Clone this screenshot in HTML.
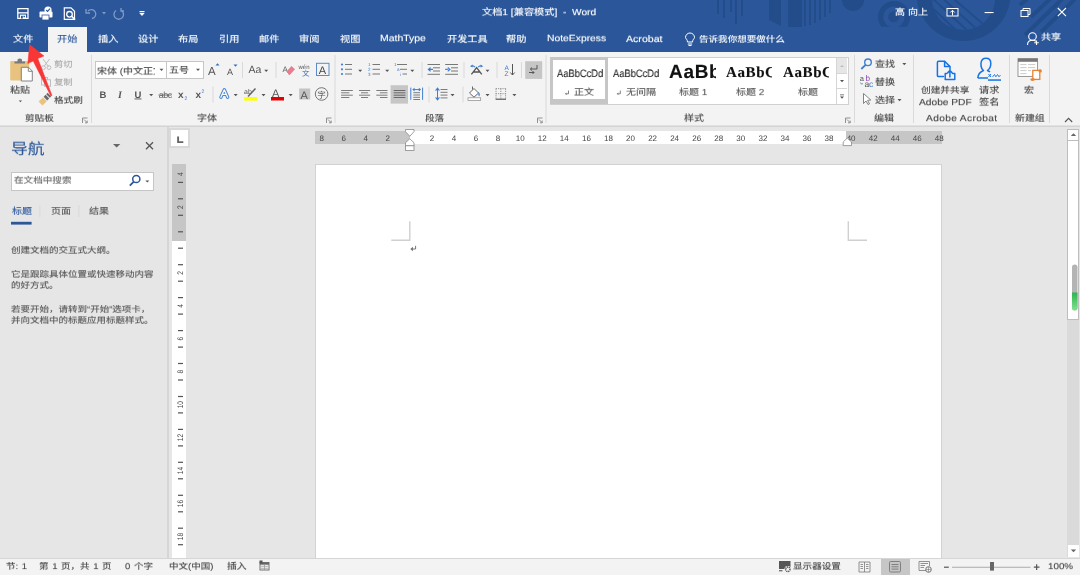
<!DOCTYPE html>
<html lang="zh-CN"><head><meta charset="utf-8">
<style>
html,body{margin:0;padding:0}
body{width:1080px;height:575px;position:relative;overflow:hidden;background:#E6E6E6;font-family:"Liberation Sans",sans-serif;text-rendering:geometricPrecision}
.a{position:absolute;white-space:nowrap;line-height:1;will-change:transform;-webkit-text-stroke:0.12px currentColor;transform:scaleY(0.9);transform-origin:0 85%}
.r{position:absolute}
.w{color:#fff}
.t{color:#444}
svg{position:absolute;left:0;top:0}
</style></head><body>
<!-- title + tabs -->
<div class="r" style="left:0;top:0;width:1080px;height:52px;background:#2B579A"></div>
<svg width="1080" height="52" viewBox="0 0 1080 52">
 <defs><clipPath id="ringclip"><rect x="860" y="0" width="60" height="26.8"/></clipPath><clipPath id="innerclip"><circle cx="963.5" cy="-1.5" r="31.5"/></clipPath></defs>
 <g fill="#234C8B">
  <rect x="717" y="0" width="2" height="14"/><rect x="723" y="0" width="2" height="18"/><rect x="730" y="0" width="2" height="12"/>
  <rect x="735" y="0" width="2" height="24"/><rect x="741" y="0" width="2" height="16"/>
  <path d="M769 0 L781 0 L781 26 L769 20 Z"/>
  <rect x="788" y="0" width="14" height="27"/>
  <rect x="804" y="0" width="2" height="26"/><rect x="809" y="0" width="2" height="25"/><rect x="814" y="0" width="2" height="23"/><rect x="819" y="0" width="2" height="20"/><rect x="824" y="0" width="2" height="17"/><rect x="829" y="0" width="2" height="13"/>
  <circle cx="853" cy="0" r="11"/><circle cx="893.7" cy="16.8" r="5.5"/>
 </g>
 <g fill="none" stroke="#234C8B">
  <circle cx="894" cy="17" r="13.3" stroke-width="5.4" clip-path="url(#ringclip)"/>
 </g>
 <path fill="#234C8B" fill-rule="evenodd" d="M916.5 -6 A47 47 0 1 0 1010.5 -6 A47 47 0 1 0 916.5 -6 Z M932 -1.5 A31.5 31.5 0 1 0 995 -1.5 A31.5 31.5 0 1 0 932 -1.5 Z"/>
 <g stroke="#234C8B" stroke-width="2" clip-path="url(#innerclip)">
  <path d="M926 2 L960 34 M932 -2 L970 33 M940 -4 L980 32 M948 -6 L990 30"/>
 </g>
 <g stroke="#234C8B" stroke-width="4">
  <path d="M1020 5 L1027 -1 M1031 17 L1050 -1 M1025 35 L1062 -1 M1041 32 L1075 -1"/>
 </g>
</svg>
<div class="r" style="left:48px;top:27px;width:39px;height:25px;background:#F3F3F3"></div>

<!-- QAT icons -->
<svg width="160" height="26" viewBox="0 0 160 26">
 <path d="M17.8 8.7 H28 V18.4 H17.8 Z" fill="none" stroke="#fff" stroke-width="1.3"/>
 <rect x="17.8" y="12.2" width="10.2" height="1.3" fill="#fff"/>
 <rect x="19.9" y="14.6" width="6.1" height="3.9" fill="#fff"/>
 <rect x="21" y="15.8" width="1.8" height="2.7" fill="#2B579A"/>
 <rect x="23.4" y="15.8" width="1.6" height="1.4" fill="#2B579A"/>
 <!-- print -->
 <rect x="39.5" y="11.5" width="13" height="6" rx="1" fill="#fff"/>
 <rect x="42" y="15" width="7" height="5" fill="#fff" stroke="#2B579A" stroke-width="0.8"/>
 <circle cx="48" cy="10" r="3.6" fill="#fff"/>
 <path d="M46.2 10 L47.6 11.4 L50 8.6" stroke="#2B579A" stroke-width="1.1" fill="none"/>
 <!-- preview -->
 <path d="M64.3 7.8 H71 L74.5 11.2 V19.3 H64.3 Z" fill="none" stroke="#fff" stroke-width="1.2"/>
 <circle cx="69.5" cy="14.3" r="2.8" fill="none" stroke="#fff" stroke-width="1.3"/>
 <path d="M71.6 16.3 L75 19.6" stroke="#fff" stroke-width="1.6"/>
 <!-- undo -->
 <path d="M88 11 A4.5 4.5 0 1 1 92 18.5" fill="none" stroke="#7E9BC8" stroke-width="1.3"/>
 <path d="M86 9 V13 H90" fill="none" stroke="#7E9BC8" stroke-width="1.3"/>
 <path d="M102 12 L106 12 L104 14.5 Z" fill="#7E9BC8"/>
 <!-- redo -->
 <path d="M121.5 10.5 A4.8 4.8 0 1 1 116 10.5" fill="none" stroke="#7E9BC8" stroke-width="1.3"/>
 <path d="M121 8 V11 H124" fill="none" stroke="#7E9BC8" stroke-width="1.3"/>
 <!-- customize -->
 <rect x="139.5" y="11" width="5" height="1.2" fill="#fff"/>
 <path d="M139.3 13 H144.7 L142 16 Z" fill="#fff"/>
</svg>
<div class="a w" style="left:482px;top:7.5px;font-size:10.2px">文档1 [兼容模式]&nbsp;&nbsp;-&nbsp;&nbsp;Word</div>
<div class="a w" style="left:894.8px;top:7.5px;font-size:10px;word-spacing:0.3px">高 向上</div>
<svg width="1080" height="52" viewBox="0 0 1080 52">
 <rect x="947" y="8.5" width="11" height="7.5" fill="none" stroke="#fff" stroke-width="1"/>
 <path d="M952.5 15.5 V10.5 M950.3 12.5 L952.5 10.3 L954.7 12.5" stroke="#fff" stroke-width="1" fill="none"/>
 <rect x="984.6" y="12" width="9" height="1.1" fill="#fff"/>
 <rect x="1021" y="10.5" width="7" height="6" fill="none" stroke="#fff" stroke-width="1"/>
 <path d="M1023 10.5 V8.5 H1030 V14.5 H1028" fill="none" stroke="#fff" stroke-width="1"/>
 <path d="M1057.8 8 L1066 16.2 M1066 8 L1057.8 16.2" stroke="#fff" stroke-width="1.1"/>
 <!-- share -->
 <circle cx="1032.5" cy="36.5" r="3.8" fill="none" stroke="#fff" stroke-width="1.1"/>
 <path d="M1027.5 45 C1027.5 41 1030 40.3 1032.5 40.3 C1034 40.3 1035 40.6 1036 41.2" fill="none" stroke="#fff" stroke-width="1.1"/>
 <path d="M1036.5 40.5 V45 M1034.2 42.7 H1038.8" stroke="#fff" stroke-width="1.1"/>
 <!-- bulb -->
 <path d="M687.5 42 C687.5 39.5 685.5 38.5 685.5 37.5 A4.5 4.5 0 1 1 694.5 37.5 C694.5 38.5 692.5 39.5 692.5 42 Z" fill="none" stroke="#fff" stroke-width="1"/>
 <path d="M687.8 44 H692.2 M688.5 45.5 H691.5" stroke="#fff" stroke-width="1"/>
</svg>
<div class="a w" style="left:1041px;top:33px;font-size:10px">共享</div>
<div class="a w" style="left:13px;top:35px;font-size:10.2px">文件</div>
<div class="a" style="left:57px;top:35px;font-size:10.2px;color:#2B579A">开始</div>
<div class="a w" style="left:98px;top:35px;font-size:10.2px">插入</div>
<div class="a w" style="left:138px;top:35px;font-size:10.2px">设计</div>
<div class="a w" style="left:178px;top:35px;font-size:10.2px">布局</div>
<div class="a w" style="left:219px;top:35px;font-size:10.2px">引用</div>
<div class="a w" style="left:259px;top:35px;font-size:10.2px">邮件</div>
<div class="a w" style="left:299px;top:35px;font-size:10.2px">审阅</div>
<div class="a w" style="left:340px;top:35px;font-size:10.2px">视图</div>
<div class="a w" style="left:380px;top:34px;font-size:10.45px">MathType</div>
<div class="a w" style="left:447px;top:35px;font-size:10.2px">开发工具</div>
<div class="a w" style="left:506px;top:35px;font-size:10.2px">帮助</div>
<div class="a w" style="left:547px;top:34px;font-size:10.35px">NoteExpress</div>
<div class="a w" style="left:626px;top:34px;font-size:10.6px">Acrobat</div>
<div class="a w" style="left:699px;top:35px;font-size:9.55px">告诉我你想要做什么</div>

<!-- RIBBON -->
<div class="r" style="left:0;top:52px;width:1080px;height:74px;background:#F3F3F3"></div>
<div class="r" style="left:0;top:125px;width:1080px;height:1px;background:#E2E2E2"></div><div class="r" style="left:0;top:126px;width:1080px;height:1px;background:#D4D4D4"></div>
<svg width="1080" height="130" viewBox="0 0 1080 130">
 <g fill="#DADADA">
  <rect x="91" y="55" width="1" height="68"/>
  <rect x="334.5" y="55" width="1" height="68"/>
  <rect x="545.5" y="55" width="1" height="68"/>
  <rect x="854" y="55" width="1" height="68"/>
  <rect x="913" y="55" width="1" height="68"/>
  <rect x="1009" y="55" width="1" height="68"/>
  <rect x="1049" y="55" width="1" height="68"/>
 </g>
 <g fill="#DADADA">
  <rect x="242" y="62" width="1" height="16"/>
  <rect x="275.5" y="62" width="1" height="16"/>
  <rect x="212.5" y="86.5" width="1" height="16"/>
  <rect x="421.5" y="62" width="1" height="16"/>
  <rect x="463.5" y="62" width="1" height="16"/>
  <rect x="496.5" y="62" width="1" height="16"/>
  <rect x="521" y="62" width="1" height="16"/>
  <rect x="428.5" y="86.5" width="1" height="16"/>
  <rect x="462.5" y="86.5" width="1" height="16"/>
 </g>
 <!-- launchers -->
 <g fill="none" stroke="#777" stroke-width="0.8">
  <path d="M82.5 123 V118 H87.5 M84 119.5 L87 122.5 M85 122.8 H87.2 V120.6"/>
  <path d="M326.5 123 V118 H331.5 M328 119.5 L331 122.5 M329 122.8 H331.2 V120.6"/>
  <path d="M537.5 123 V118 H542.5 M539 119.5 L542 122.5 M540 122.8 H542.2 V120.6"/>
  <path d="M845.5 123 V118 H850.5 M847 119.5 L850 122.5 M848 122.8 H850.2 V120.6"/>
 </g>
 <path d="M1065 122 L1068.6 118.3 L1072.2 122" fill="none" stroke="#555" stroke-width="1.1"/>
</svg>
<div class="a t" style="left:25px;top:114.3px;font-size:9.6px">剪贴板</div>
<div class="a t" style="left:197px;top:114.3px;font-size:10px">字体</div>
<div class="a t" style="left:425px;top:114.3px;font-size:9.6px">段落</div>
<div class="a t" style="left:684px;top:114.3px;font-size:10px">样式</div>
<div class="a t" style="left:874px;top:114.3px;font-size:10px">编辑</div>
<div class="a t" style="left:925.5px;top:114px;font-size:10.2px;letter-spacing:0.35px">Adobe Acrobat</div>
<div class="a t" style="left:1015px;top:114.3px;font-size:9.9px">新建组</div>

<!-- clipboard group -->
<svg width="100" height="130" viewBox="0 0 100 130">
 <rect x="10.2" y="61" width="19" height="19.5" rx="1" fill="#E8C27E"/>
 <path d="M14.5 63.5 V61.5 H17.5 V59.5 Q19.8 57.5 22 59.5 V61.5 H25 V63.5 Z" fill="#7A7A7A"/>
 <path d="M21.3 67.3 H28.5 L32.3 71.1 V81 H21.3 Z" fill="#fff" stroke="#777" stroke-width="0.9"/>
 <path d="M28.3 67.3 V71.3 H32.3" fill="none" stroke="#777" stroke-width="0.9"/>
 <path d="M18.8 100.5 H22 L20.4 102.3 Z" fill="#555"/>
 <!-- scissors -->
 <g fill="none" stroke="#BDBDBD" stroke-width="1">
  <path d="M43 59 L48.5 66.5 M49.5 59 L44 66.5"/>
  <circle cx="43.5" cy="67.6" r="1.9"/><circle cx="49" cy="67.6" r="1.9"/>
 </g>
 <!-- copy -->
 <g fill="none" stroke="#BDBDBD" stroke-width="1">
  <rect x="41.5" y="77.5" width="6" height="7.5"/>
  <rect x="44.5" y="79.8" width="6" height="6.5" fill="#F3F3F3"/>
 </g>
 <!-- format painter -->
 <path d="M38.6 101.6 L43 97.4 L46.8 101.2 L42.4 105.4 Z" fill="#E8C27E"/>
 <path d="M43.6 96.8 L45.6 94.8 L49.2 98.4 L47.2 100.4 Z" fill="#6A6A6A"/>
 <path d="M46.2 94.2 L47.6 92.8 L51.2 96.4 L49.8 97.8 Z" fill="#6A6A6A"/>
</svg>
<div class="a t" style="left:10px;top:85.5px;font-size:10px">粘贴</div>
<div class="a" style="left:54px;top:60px;font-size:9.3px;color:#A8A8A8">剪切</div>
<div class="a" style="left:54px;top:78px;font-size:9.3px;color:#A8A8A8">复制</div>
<div class="a t" style="left:54px;top:96px;font-size:9.6px">格式刷</div>

<!-- font group -->
<div class="r" style="left:95px;top:61px;width:107px;height:16px;background:#fff;border:1px solid #C6C6C6"></div>
<div class="r" style="left:166px;top:62px;width:1px;height:16px;background:#C6C6C6"></div>
<div class="a" style="left:97px;top:64.5px;font-size:10px;line-height:13px;height:13px;color:#444;width:58px;overflow:hidden">宋体 (中文正文</div>
<div class="a" style="left:169px;top:66px;font-size:10px;color:#444">五号</div>
<svg width="1080" height="130" viewBox="0 0 1080 130">
 <g fill="#555">
  <path d="M159.5 68.8 H163.5 L161.5 71 Z"/>
  <path d="M196 68.8 H200 L198 71 Z"/>
  <path d="M264.2 69.8 H268.2 L266.2 72 Z"/>
  <path d="M149.2 94 H153.2 L151.2 96.2 Z"/>
  <path d="M233.7 94 H237.7 L235.7 96.2 Z"/>
  <path d="M261.5 94 H265.5 L263.5 96.2 Z"/>
  <path d="M288.7 94 H292.7 L290.7 96.2 Z"/>
 </g>
 <!-- grow/shrink -->
 <text x="208" y="74.5" font-family="Liberation Sans" font-size="11.5" fill="#555">A</text>
 <path d="M215.5 65.5 L217.5 63.3 L219.5 65.5 Z" fill="#2F6FBF"/>
 <text x="227" y="74.5" font-family="Liberation Sans" font-size="9" fill="#555">A</text>
 <path d="M233.5 64.5 H237.5 L235.5 66.8 Z" fill="#2F6FBF"/>
 <text x="248.5" y="73" font-family="Liberation Sans" font-size="10.5" fill="#555">Aa</text>
 <!-- clear formatting -->
 <text x="282.5" y="72" font-family="Liberation Sans" font-size="8" fill="#666">A</text>
 <path d="M286 72 L291.5 66 L295 69.3 L289.5 75.3 Z" fill="#E87D8F"/>
 <path d="M286 72 L288 74 " stroke="#fff" stroke-width="0.8"/>
 <!-- phonetic -->
 <text x="298.5" y="68.5" font-family="Liberation Sans" font-size="6" fill="#555">wén</text>
 <text x="302" y="76" font-family="Liberation Sans" font-size="7.5" fill="#2F6FBF">文</text>
 <!-- char border -->
 <rect x="316.5" y="63.3" width="12.5" height="12.2" fill="none" stroke="#5A8BC8" stroke-width="1"/>
 <text x="318.8" y="74" font-family="Liberation Sans" font-size="11" fill="#444">A</text>
 <!-- row 2 -->
 <text x="99.5" y="97.8" font-family="Liberation Sans" font-size="9.5" font-weight="bold" fill="#555">B</text>
 <text x="118" y="97.8" font-family="Liberation Serif" font-size="10" font-style="italic" font-weight="bold" fill="#555">I</text>
 <text x="134.5" y="97.5" font-family="Liberation Sans" font-size="9.5" font-weight="bold" fill="#555">U</text>
 <rect x="134.5" y="98.5" width="7" height="0.9" fill="#555"/>
 <text x="158.8" y="97.5" font-family="Liberation Sans" font-size="9" fill="#666" letter-spacing="-0.55">abc</text>
 <rect x="158.5" y="94.6" width="13" height="0.9" fill="#666"/>
 <text x="178" y="97.5" font-family="Liberation Sans" font-size="10" font-weight="bold" fill="#555">x</text>
 <text x="184.5" y="100" font-family="Liberation Sans" font-size="5" fill="#2F6FBF">2</text>
 <text x="195.5" y="97.5" font-family="Liberation Sans" font-size="10" font-weight="bold" fill="#555">x</text>
 <text x="201.5" y="93" font-family="Liberation Sans" font-size="5" fill="#2F6FBF">2</text>
 <!-- text effects -->
 <path d="M220.9 97.3 L224.3 89.8 L227.7 97.3 M222.5 94.3 H226.1" fill="none" stroke="#4A86CF" stroke-width="3.3" stroke-linejoin="round" stroke-linecap="round"/>
 <path d="M220.9 97.3 L224.3 89.8 L227.7 97.3 M222.5 94.3 H226.1" fill="none" stroke="#FAFAFA" stroke-width="1.3" stroke-linejoin="round" stroke-linecap="round"/>
 <!-- highlight -->
 <text x="244" y="93.5" font-family="Liberation Sans" font-size="7" fill="#555">ab</text>
 <path d="M248 96.5 L255.5 88.5" stroke="#666" stroke-width="1.6"/>
 <rect x="244.2" y="97" width="13" height="3.6" fill="#FFFF00"/>
 <!-- font color -->
 <text x="272" y="96.5" font-family="Liberation Sans" font-size="11" fill="#555">A</text>
 <rect x="271" y="97" width="13" height="3.5" fill="#E60000"/>
 <!-- shading -->
 <rect x="299.2" y="88.5" width="11" height="11" fill="#C4C4C4"/>
 <text x="300.5" y="98.5" font-family="Liberation Sans" font-size="11" fill="#555">A</text>
 <!-- enclose -->
 <circle cx="321.6" cy="94" r="6.3" fill="none" stroke="#666" stroke-width="0.9"/>
 <text x="317.2" y="97.5" font-family="Liberation Sans" font-size="8.5" fill="#555">字</text>
</svg>

<!-- paragraph group -->
<svg width="1080" height="130" viewBox="0 0 1080 130">
 <g fill="#555">
  <path d="M358.2 69.8 H362.2 L360.2 72 Z"/>
  <path d="M385.2 69.8 H389.2 L387.2 72 Z"/>
  <path d="M410.3 69.8 H414.3 L412.3 72 Z"/>
  <path d="M485.5 69.8 H489.5 L487.5 72 Z"/>
  <path d="M450.5 94 H454.5 L452.5 96.2 Z"/>
  <path d="M485.5 94 H489.5 L487.5 96.2 Z"/>
  <path d="M512.4 94 H516.4 L514.4 96.2 Z"/>
 </g>
 <!-- bullets -->
 <g fill="#3F7FCF"><circle cx="342" cy="64.5" r="1.1"/><circle cx="342" cy="69.3" r="1.1"/><circle cx="342" cy="74" r="1.1"/></g>
 <g stroke="#777" stroke-width="1"><path d="M345 64.5 H352 M345 69.3 H352 M345 74 H352"/></g>
 <!-- numbering -->
 <g fill="#3F7FCF" font-family="Liberation Sans" font-size="4.5"><text x="368" y="66">1</text><text x="368" y="71">2</text><text x="368" y="76">3</text></g>
 <g stroke="#777" stroke-width="1"><path d="M372.5 64.5 H380 M372.5 69.3 H380 M372.5 74 H380"/></g>
 <!-- multilevel -->
 <g fill="#3F7FCF" font-family="Liberation Sans" font-size="4.5"><text x="394" y="66">1</text><text x="397" y="71">a</text><text x="400" y="76">i</text></g>
 <g stroke="#777" stroke-width="1"><path d="M397 64.5 H407 M400 69.3 H407 M402.5 74 H407"/></g>
 <!-- decrease indent -->
 <g stroke="#777" stroke-width="1"><path d="M427.5 64.5 H440 M433 67.8 H440 M433 71 H440 M427.5 74.3 H440"/></g>
 <path d="M427.5 69.4 L430.5 66.8 V72 Z M429.5 68.8 H433 V70 H429.5Z" fill="#3F7FCF"/>
 <!-- increase indent -->
 <g stroke="#777" stroke-width="1"><path d="M445.2 64.5 H458 M451 67.8 H458 M451 71 H458 M445.2 74.3 H458"/></g>
 <path d="M450.8 69.4 L447.8 66.8 V72 Z M445.2 68.8 H448.5 V70 H445.2Z" fill="#3F7FCF"/>
 <!-- asian layout -->
 <path d="M471.4 74.3 L476.6 67.6 L481.8 74.3 M473.6 72 H479.6" fill="none" stroke="#555" stroke-width="1.3"/>
 <path d="M475 67.2 Q473.6 65.4 472 66" fill="none" stroke="#3F7FCF" stroke-width="1.1"/>
 <path d="M478.2 67.2 Q479.6 65.4 481.2 66" fill="none" stroke="#3F7FCF" stroke-width="1.1"/>
 <path d="M470 66.2 L472.6 64.6 L472.6 67.6 Z M483.2 66.2 L480.6 64.6 L480.6 67.6 Z" fill="#3F7FCF"/>
 <!-- sort -->
 <text x="504.5" y="69.5" font-family="Liberation Sans" font-size="6.5" fill="#3F7FCF">A</text>
 <text x="504.5" y="75.5" font-family="Liberation Sans" font-size="6.5" fill="#9B59B6">Z</text>
 <path d="M512.5 64 V75 M510.3 72.5 L512.5 75 L514.7 72.5" fill="none" stroke="#555" stroke-width="1"/>
 <!-- show/hide selected -->
 <rect x="525.2" y="61.2" width="17" height="17.7" fill="#C6C6C6"/>
 <path d="M537 65 V69 H530.5 M532 67.5 L530.3 69 L532 70.5" fill="none" stroke="#555" stroke-width="1"/>
 <path d="M529 72.5 H534 M532.5 71 L534 72.5 L532.5 74" fill="none" stroke="#555" stroke-width="1"/>
 <!-- align row -->
 <g stroke="#6E6E6E" stroke-width="0.9">
  <path d="M341.1 90.5 H352.8 M341.1 92.8 H349.3 M341.1 95.2 H352.8 M341.1 97.5 H349.3"/>
  <path d="M359 90.5 H370.2 M361 92.8 H368.1 M359 95.2 H370.2 M361 97.5 H368.1"/>
  <path d="M376.3 90.5 H387.5 M379.9 92.8 H387.5 M376.3 95.2 H387.5 M379.9 97.5 H387.5"/>
 </g>
 <rect x="390.6" y="85.2" width="17.4" height="18.4" fill="#C6C6C6"/>
 <g stroke="#5E5E5E" stroke-width="0.9"><path d="M393.7 90.5 H405.4 M393.7 92.8 H405.4 M393.7 95.2 H405.4 M393.7 97.5 H405.4"/></g>
 <g stroke="#6E6E6E" stroke-width="0.9"><path d="M413.3 92.7 H420 M413.3 95 H420 M413.3 97.3 H420 M413.3 99.5 H420"/></g>
 <g stroke="#3F7FCF" stroke-width="1"><path d="M410.8 87.6 V99.8 M422.6 87.6 V99.8 M413.5 89.6 H420"/></g>
 <path d="M412.3 89.6 L414.6 87.7 V91.5 Z M421.1 89.6 L418.8 87.7 V91.5 Z" fill="#3F7FCF"/>
 <!-- line spacing -->
 <g stroke="#6E6E6E" stroke-width="0.9"><path d="M440.5 89.5 H447.5 M440.5 92.3 H447.5 M440.5 95.1 H447.5 M440.5 97.9 H447.5"/></g>
 <path d="M437.5 89 V99" stroke="#3F7FCF" stroke-width="1"/>
 <path d="M435.6 90.6 L437.5 88.2 L439.4 90.6 M435.6 97.4 L437.5 99.8 L439.4 97.4" fill="none" stroke="#3F7FCF" stroke-width="1.1"/>
 <!-- shading -->
 <path d="M469.5 93 L474 88.5 L478.5 93 L474 97.2 Z" fill="#fff" stroke="#555" stroke-width="0.9"/>
 <path d="M472.5 89.5 V86.5" stroke="#555" stroke-width="0.9"/>
 <path d="M478.8 92 Q480.8 94.5 479.5 96.5 Q477.5 95 478.8 92Z" fill="#3F7FCF"/>
 <rect x="468" y="97.8" width="12.7" height="2.8" fill="#fff" stroke="#888" stroke-width="0.7"/>
 <!-- borders -->
 <g fill="none" stroke="#8A8A8A" stroke-width="0.9" stroke-dasharray="1.2 1"><path d="M495.8 88.6 H505.8 M495.8 93.7 H505.8 M496 88.6 V98.5 M500.8 88.6 V98.5 M505.6 88.6 V98.5"/></g>
 <path d="M495.6 99.2 H506" stroke="#555" stroke-width="1.2"/>
</svg>

<!-- styles gallery -->
<div class="r" style="left:550px;top:57px;width:297px;height:46px;background:#fff;border:1px solid #D0D0D0"></div>
<div class="r" style="left:550px;top:57px;width:52px;height:39px;border:3px solid #C6C6C6;border-bottom-width:5px;background:#fff"></div>
<div class="r" style="left:837px;top:58px;width:10px;height:15px;background:#E6E6E6"></div>
<div class="r" style="left:837px;top:73px;width:10px;height:1px;background:#D6D6D6"></div>
<div class="r" style="left:837px;top:88px;width:10px;height:1px;background:#D6D6D6"></div>
<div class="r" style="left:836px;top:58px;width:1px;height:46px;background:#D6D6D6"></div>
<svg width="1080" height="130" viewBox="0 0 1080 130">
 <path d="M840 67 L842 65 L844 67 Z" fill="#BBB"/>
 <path d="M840 80 H844 L842 82.2 Z" fill="#555"/>
 <path d="M840 94.5 H844 V95.3 H840Z M840 96.5 H844 L842 98.7 Z" fill="#555"/>
 <g fill="none" stroke="#666" stroke-width="0.8">
  <path d="M568.5 90.5 V93.8 H565.5 M566.5 92.8 L565.5 93.8 L566.5 94.8"/>
  <path d="M620.3 90.5 V93.8 H617.3 M618.3 92.8 L617.3 93.8 L618.3 94.8"/>
 </g>
</svg>
<div class="a" style="left:556.5px;top:68.5px;font-size:10.8px;color:#222;-webkit-text-stroke:0.1px #222;transform:scaleX(0.865);transform-origin:0 0">AaBbCcDd</div>
<div class="a" style="left:613px;top:68.5px;font-size:10.8px;color:#222;-webkit-text-stroke:0.1px #222;transform:scaleX(0.865);transform-origin:0 0">AaBbCcDd</div>
<div class="a" style="left:574px;top:88px;font-size:10px;color:#555">正文</div>
<div class="a" style="left:626px;top:88px;font-size:10px;color:#555">无间隔</div>
<div class="r" style="left:669px;top:60px;width:47px;height:24px;overflow:hidden"><div class="a" style="left:0;top:3px;font-size:19px;font-weight:bold;color:#111;letter-spacing:0.7px;transform:none">AaBb</div></div>
<div class="r" style="left:726px;top:60px;width:46px;height:24px;overflow:hidden"><div class="a" style="left:0;top:5.5px;font-size:15px;font-weight:bold;color:#111;font-family:'Liberation Serif',serif;letter-spacing:0.6px;transform:none">AaBbC</div></div>
<div class="r" style="left:783px;top:60px;width:46px;height:24px;overflow:hidden"><div class="a" style="left:0;top:5.5px;font-size:15px;font-weight:bold;color:#111;font-family:'Liberation Serif',serif;letter-spacing:0.6px;transform:none">AaBbC</div></div>
<div class="a" style="left:678.5px;top:88px;font-size:10px;color:#555">标题 1</div>
<div class="a" style="left:736px;top:88px;font-size:10px;color:#555">标题 2</div>
<div class="a" style="left:798px;top:88px;font-size:10px;color:#555">标题</div>

<!-- editing group -->
<svg width="1080" height="130" viewBox="0 0 1080 130">
 <circle cx="868" cy="62.3" r="3.3" fill="none" stroke="#3F7FCF" stroke-width="1.4"/>
 <path d="M865.6 64.8 L861.3 69" stroke="#3F7FCF" stroke-width="1.8"/>
 <path d="M902.3 63 H906.3 L904.3 65.2 Z" fill="#555"/>
 <text x="859.8" y="81" font-family="Liberation Sans" font-size="7.5" fill="#555">a</text>
 <text x="865.6" y="81" font-family="Liberation Sans" font-size="8.2" fill="#8E44AD">b</text>
 <text x="864.4" y="87" font-family="Liberation Sans" font-size="8.5" fill="#555">a</text>
 <text x="869" y="87" font-family="Liberation Sans" font-size="8.5" fill="#3F7FCF">c</text>
 <path d="M860.4 82.6 L861.6 84.2 L862.8 83.6" fill="none" stroke="#3F7FCF" stroke-width="0.9"/>
 <path d="M863.5 93.5 V103.5 L866 101 L868 104.5 L869.5 103.8 L867.6 100.3 L870.8 100 Z" fill="#fff" stroke="#666" stroke-width="0.8" stroke-linejoin="round"/>
 <path d="M897.5 99 H901.5 L899.5 101.2 Z" fill="#555"/>
 <!-- adobe create pdf -->
 <g fill="none" stroke="#1473E6" stroke-width="1.5" stroke-linejoin="round" stroke-linecap="round">
  <path d="M943.5 76.6 H938.6 Q937.4 76.6 937.4 75.4 V62.4 Q937.4 61.2 938.6 61.2 H944.6 L950 66.6 V69.5"/>
  <path d="M944.6 61.6 V66.6 H949.6"/>
  <path d="M947 73.4 H945.2 V79.5 H954.8 V73.4 H952.6"/>
  <path d="M949.9 77 V70.6 M947.8 72.6 L949.9 70.5 L952 72.6"/>
 </g>
 <!-- request sign -->
 <g fill="none" stroke="#1473E6" stroke-width="1.5" stroke-linejoin="round">
  <path d="M977.8 78 C978 74 980.5 71.8 983.5 70.5 C981 68.5 980.8 65.5 981 63 C981.5 59.5 984 58.3 986 58.3 C988.5 58.3 990.8 60 990.8 63.5 C990.8 66.5 989.5 69 987.5 70.5 C988.5 71 989.5 71.5 990 72"/>
  <path d="M977.8 78 H988"/>
 </g>
 <path d="M988.5 74 L991 77 M991 74 L988.5 77" stroke="#1473E6" stroke-width="1"/>
 <path d="M992.5 77 L994.5 74.5 L995.8 76.8 L997.5 74.5 L999 76.8 L1000.5 75" fill="none" stroke="#1473E6" stroke-width="0.9"/>
 <rect x="988" y="79.3" width="13" height="1.5" fill="#1473E6"/>
 <!-- macro -->
 <rect x="1018" y="58.6" width="19.6" height="17.8" fill="#fff" stroke="#8A8A8A" stroke-width="0.9"/>
 <rect x="1018" y="58.6" width="19.6" height="3.2" fill="#777"/>
 <g stroke="#C4C4C4" stroke-width="0.9"><path d="M1020.3 64.6 H1026.5 M1028 64.6 H1035.3 M1020.3 67.6 H1026.5 M1028 67.6 H1035.3 M1020.3 70.6 H1026.5 M1028 70.6 H1031 M1020.3 73.6 H1026.5"/></g>
 <rect x="1032.8" y="70.4" width="7" height="9" fill="#fff" stroke="#E8822F" stroke-width="1.3"/>
 <circle cx="1040.2" cy="70.9" r="1.7" fill="#E8822F"/>
 <ellipse cx="1032.6" cy="79.6" rx="2.3" ry="1.4" fill="#E8822F"/>
</svg>
<div class="a t" style="left:875px;top:60px;font-size:10px">查找</div>
<div class="a t" style="left:875px;top:78px;font-size:10px">替换</div>
<div class="a t" style="left:875px;top:95.8px;font-size:10px">选择</div>
<div class="a t" style="left:921px;top:86px;font-size:9.7px">创建并共享</div>
<div class="a t" style="left:918.5px;top:97.5px;font-size:10.2px;letter-spacing:0px">Adobe PDF</div>
<div class="a t" style="left:979px;top:86px;font-size:10.2px">请求</div>
<div class="a t" style="left:979px;top:98px;font-size:10.2px">签名</div>
<div class="a t" style="left:1024px;top:86px;font-size:10px">宏</div>

<!-- NAV PANE -->
<div class="r" style="left:167px;top:127px;width:2px;height:431px;background:#D6D6D6"></div>
<div class="a" style="left:10.5px;top:140.5px;font-size:16.8px;color:#2B579A">导航</div>
<div class="r" style="left:11px;top:171.5px;width:141px;height:17px;background:#fff;border:1px solid #C6C6C6"></div>
<svg width="170" height="230" viewBox="0 0 170 230">
 <path d="M113 144 H120.3 L116.65 147.6 Z" fill="#666"/>
 <path d="M146 142.2 L153 149.2 M153 142.2 L146 149.2" stroke="#555" stroke-width="1.3"/>
 <circle cx="136.3" cy="179" r="3.6" fill="none" stroke="#2B579A" stroke-width="1.5"/>
 <path d="M133.8 181.6 L129.8 185.6" stroke="#2B579A" stroke-width="1.8"/>
 <path d="M145.3 180.5 H149.3 L147.3 182.5 Z" fill="#555"/>
 <rect x="39.5" y="205" width="0.8" height="12" fill="#D6D6D6"/>
 <rect x="78.5" y="205" width="0.8" height="12" fill="#D6D6D6"/>
 <rect x="11" y="221.8" width="20.6" height="2.8" fill="#2B579A"/>
</svg>
<div class="a" style="left:13.5px;top:176px;font-size:9.6px;color:#6A6A6A">在文档中搜索</div>
<div class="a" style="left:12px;top:207px;font-size:10px;color:#2B579A">标题</div>
<div class="a" style="left:50.5px;top:207px;font-size:10px;color:#555">页面</div>
<div class="a" style="left:89px;top:207px;font-size:10px;color:#555">结果</div>
<div class="a" style="left:11.3px;top:245.5px;font-size:9.5px;color:#555">创建文档的交互式大纲。</div>
<div class="a" style="left:11.3px;top:270.3px;font-size:9.5px;color:#555">它是跟踪具体位置或快速移动内容</div>
<div class="a" style="left:11.3px;top:280.7px;font-size:9.5px;color:#555">的好方式。</div>
<div class="a" style="left:11.3px;top:305px;font-size:9.5px;color:#555">若要开始，请转到“开始”选项卡，</div>
<div class="a" style="left:11.3px;top:316.3px;font-size:9.5px;color:#555">并向文档中的标题应用标题样式。</div>
<!-- STATUS BAR -->
<div class="r" style="left:0;top:558px;width:1080px;height:17px;background:#F3F3F3"></div>
<div class="r" style="left:0;top:558px;width:1080px;height:1px;background:#D6D6D6"></div>
<div class="a t" style="left:5.5px;top:561.5px;font-size:9.5px;word-spacing:1px">节: 1</div>
<div class="a t" style="left:38.5px;top:561.5px;font-size:9.5px;word-spacing:1px">第 1 页，共 1 页</div>
<div class="a t" style="left:125px;top:561.5px;font-size:9.5px;word-spacing:1px">0 个字</div>
<div class="a t" style="left:168.5px;top:561.5px;font-size:9.5px">中文(中国)</div>
<div class="a t" style="left:227px;top:561.5px;font-size:9.8px">插入</div>
<div class="a t" style="left:793px;top:562px;font-size:9.6px">显示器设置</div>
<div class="r" style="left:880.5px;top:559px;width:29px;height:16px;background:#C6C6C6"></div>
<div class="a t" style="left:1048px;top:561.5px;font-size:9.8px">100%</div>
<svg width="1080" height="575" viewBox="0 0 1080 575">
 <!-- macro recording icon -->
 <rect x="260" y="562.5" width="9" height="7.5" fill="none" stroke="#666" stroke-width="0.9"/>
 <rect x="260" y="562.5" width="9" height="2.2" fill="#666"/>
 <rect x="259.5" y="560.5" width="3" height="3" fill="#555"/>
 <g stroke="#888" stroke-width="0.6"><path d="M261 566.3 H268 M261 568.3 H268 M264.5 565 V570"/></g>
 <!-- monitor icon -->
 <rect x="779" y="561" width="11.5" height="8" fill="#555"/>
 <rect x="779" y="570.2" width="3.5" height="1.1" fill="#555"/>
 <circle cx="787.8" cy="569.3" r="3.4" fill="#F3F3F3"/>
 <circle cx="787.8" cy="569.3" r="2.2" fill="none" stroke="#555" stroke-width="1.5" stroke-dasharray="1.1 0.6"/>
 <!-- read mode -->
 <g fill="none" stroke="#777" stroke-width="0.8">
  <path d="M859 562 H864.5 V572 H859 Z M864.5 562 H870 V572 H864.5"/>
  <path d="M860.5 564.5 H863 M860.5 566.5 H863 M860.5 568.5 H863 M866 564.5 H868.5 M866 566.5 H868.5 M866 568.5 H868.5"/>
 </g>
 <!-- print layout -->
 <rect x="889.5" y="561.5" width="11" height="10.5" rx="1.2" fill="none" stroke="#777" stroke-width="0.9"/>
 <g stroke="#777" stroke-width="0.9"><path d="M891.5 564.5 H898.5 M891.5 566.8 H898.5 M891.5 569.1 H898.5"/></g>
 <!-- web layout -->
 <g fill="none" stroke="#777" stroke-width="0.8">
  <path d="M926 570.5 H919 V561.5 H929.5 V566"/>
  <path d="M920.5 563.5 H928 M920.5 565.5 H925 M920.5 567.5 H924"/>
 </g>
 <circle cx="928.5" cy="569.5" r="2.8" fill="#F3F3F3" stroke="#666" stroke-width="0.9"/>
 <path d="M926 569.5 H931 M928.5 567 V572" stroke="#666" stroke-width="0.5"/>
 <!-- zoom -->
 <rect x="944" y="566.6" width="4.8" height="1.2" fill="#555"/>
 <rect x="952" y="566.8" width="78.6" height="0.8" fill="#999"/>
 <rect x="990" y="562" width="4" height="8.6" fill="#666"/>
 <path d="M1033.8 567.2 H1039.5 M1036.65 564.3 V570.1" stroke="#555" stroke-width="1.2"/>
</svg>

<!-- RULERS + PAGE -->
<div class="r" style="left:169px;top:128px;width:21px;height:20px;background:#D9D9D9"></div>
<div class="r" style="left:171px;top:130px;width:17px;height:16px;background:#fff"></div>
<svg width="200" height="150" viewBox="0 0 200 150"><path d="M178.1 136.6 V142.1 H183.3" fill="none" stroke="#666" stroke-width="1.9"/></svg>
<div class="r" style="left:315px;top:131px;width:627px;height:13px;background:#C6C6C6"></div>
<div class="r" style="left:409.5px;top:131px;width:436px;height:13px;background:#fff"></div>
<div class="r" style="left:172px;top:163.5px;width:14px;height:394.5px;background:#fff"></div>
<div class="r" style="left:172px;top:163.5px;width:14px;height:77px;background:#C6C6C6"></div>
<div class="r" style="left:315px;top:164px;width:627px;height:394px;background:#fff;border:1px solid #D2D2D2;border-bottom:none;box-sizing:border-box"></div>
<svg width="1080" height="575" viewBox="0 0 1080 575">
 <g font-family="Liberation Sans" font-size="8" fill="#444" text-anchor="middle"><text x="321.7" y="141">8</text><text x="343.7" y="141">6</text><text x="365.8" y="141">4</text><text x="387.8" y="141">2</text><text x="432.0" y="141">2</text><text x="454.0" y="141">4</text><text x="476.1" y="141">6</text><text x="498.1" y="141">8</text><text x="520.2" y="141">10</text><text x="542.3" y="141">12</text><text x="564.3" y="141">14</text><text x="586.4" y="141">16</text><text x="608.4" y="141">18</text><text x="630.5" y="141">20</text><text x="652.6" y="141">22</text><text x="674.6" y="141">24</text><text x="696.7" y="141">26</text><text x="718.7" y="141">28</text><text x="740.8" y="141">30</text><text x="762.9" y="141">32</text><text x="784.9" y="141">34</text><text x="807.0" y="141">36</text><text x="829.0" y="141">38</text><text x="851.1" y="141">40</text><text x="873.2" y="141">42</text><text x="895.2" y="141">44</text><text x="917.3" y="141">46</text><text x="939.3" y="141">48</text></g>
 <g font-family="Liberation Sans" font-size="8" fill="#444" text-anchor="middle"><text transform="translate(183 174.1) rotate(-90) scale(0.82 1)">4</text><text transform="translate(183 207.1) rotate(-90) scale(0.82 1)">2</text><text transform="translate(183 272.9) rotate(-90) scale(0.82 1)">2</text><text transform="translate(183 305.9) rotate(-90) scale(0.82 1)">4</text><text transform="translate(183 338.8) rotate(-90) scale(0.82 1)">6</text><text transform="translate(183 371.8) rotate(-90) scale(0.82 1)">8</text><text transform="translate(183 404.7) rotate(-90) scale(0.82 1)">10</text><text transform="translate(183 437.6) rotate(-90) scale(0.82 1)">12</text><text transform="translate(183 470.6) rotate(-90) scale(0.82 1)">14</text><text transform="translate(183 503.5) rotate(-90) scale(0.82 1)">16</text><text transform="translate(183 536.5) rotate(-90) scale(0.82 1)">18</text></g>
 <g fill="#555"><rect x="178" y="181.8" width="5" height="1.2"/><rect x="178" y="198.2" width="5" height="1.2"/><rect x="178" y="214.7" width="5" height="1.2"/><rect x="178" y="231.2" width="5" height="1.2"/><rect x="178" y="247.6" width="5" height="1.2"/><rect x="178" y="264.1" width="5" height="1.2"/><rect x="178" y="280.6" width="5" height="1.2"/><rect x="178" y="297.0" width="5" height="1.2"/><rect x="178" y="313.5" width="5" height="1.2"/><rect x="178" y="330.0" width="5" height="1.2"/><rect x="178" y="346.5" width="5" height="1.2"/><rect x="178" y="362.9" width="5" height="1.2"/><rect x="178" y="379.4" width="5" height="1.2"/><rect x="178" y="395.9" width="5" height="1.2"/><rect x="178" y="412.3" width="5" height="1.2"/><rect x="178" y="428.8" width="5" height="1.2"/><rect x="178" y="445.3" width="5" height="1.2"/><rect x="178" y="461.7" width="5" height="1.2"/><rect x="178" y="478.2" width="5" height="1.2"/><rect x="178" y="494.7" width="5" height="1.2"/><rect x="178" y="511.2" width="5" height="1.2"/><rect x="178" y="527.6" width="5" height="1.2"/><rect x="178" y="544.1" width="5" height="1.2"/></g>
 <!-- indent markers -->
 <path d="M405.5 129.5 H414 V131.7 L409.75 136.3 L405.5 131.7 Z" fill="#fff" stroke="#888" stroke-width="0.8" stroke-linejoin="round"/>
 <path d="M409.75 138.8 L414 142.7 V145.8 H405.5 V142.7 Z" fill="#fff" stroke="#888" stroke-width="0.8" stroke-linejoin="round"/>
 <rect x="405.5" y="145.8" width="8.5" height="4.7" fill="#fff" stroke="#888" stroke-width="0.8"/>
 <path d="M847.3 138 L851.5 142 V145.6 H843.2 V142 Z" fill="#fff" stroke="#888" stroke-width="0.8" stroke-linejoin="round"/>
 <!-- crop marks -->
 <g fill="none" stroke="#D0D0D0" stroke-width="1.4">
  <path d="M409.8 221.3 V240.2 H391.3"/>
  <path d="M848.3 221.3 V240.2 H867"/>
 </g>
 <path d="M415.6 245.8 V249 H411.2" fill="none" stroke="#777" stroke-width="1"/>
 <path d="M410.3 249 L413 246.8 V251.2 Z" fill="#777"/>
</svg>
<!-- SCROLLBAR -->
<div class="r" style="left:1067px;top:129px;width:12px;height:428px;background:#DADADA"></div>
<div class="r" style="left:1067px;top:129px;width:12px;height:191px;background:#fff;border:1px solid #BDBDBD;box-sizing:border-box"></div>
<div class="r" style="left:1067px;top:129px;width:12px;height:12px;border:1px solid #BDBDBD;box-sizing:border-box"></div>
<div class="r" style="left:1067.5px;top:545px;width:11px;height:11.5px;background:#fff"></div>
<svg width="1080" height="575" viewBox="0 0 1080 575">
 <path d="M1070.8 136 H1076.2 L1073.5 133.3 Z" fill="#666"/>
 <path d="M1070.8 549.5 H1076.2 L1073.5 552.2 Z" fill="#666"/>
 <defs><linearGradient id="gg" x1="0" y1="0" x2="0" y2="1"><stop offset="0" stop-color="#2FB34F"/><stop offset="1" stop-color="#7FE38F"/></linearGradient></defs>
 <rect x="1072" y="264.5" width="5.5" height="46" rx="2.75" fill="#B4B4B4"/>
 <path d="M1072 292.5 H1077.5 V307.8 A2.75 2.75 0 0 1 1072 307.8 Z" fill="url(#gg)"/>
</svg>

<!-- RED ARROW -->
<svg width="100" height="110" viewBox="0 0 100 110">
 <path d="M29.6 44.6 L44 56 L37.8 58.6 L52 95.5 L50.8 96 L33.2 61 L27.8 63.6 Z" fill="#F83636" stroke="#F83636" stroke-width="0.5" stroke-linejoin="round"/>
</svg>
</body></html>
